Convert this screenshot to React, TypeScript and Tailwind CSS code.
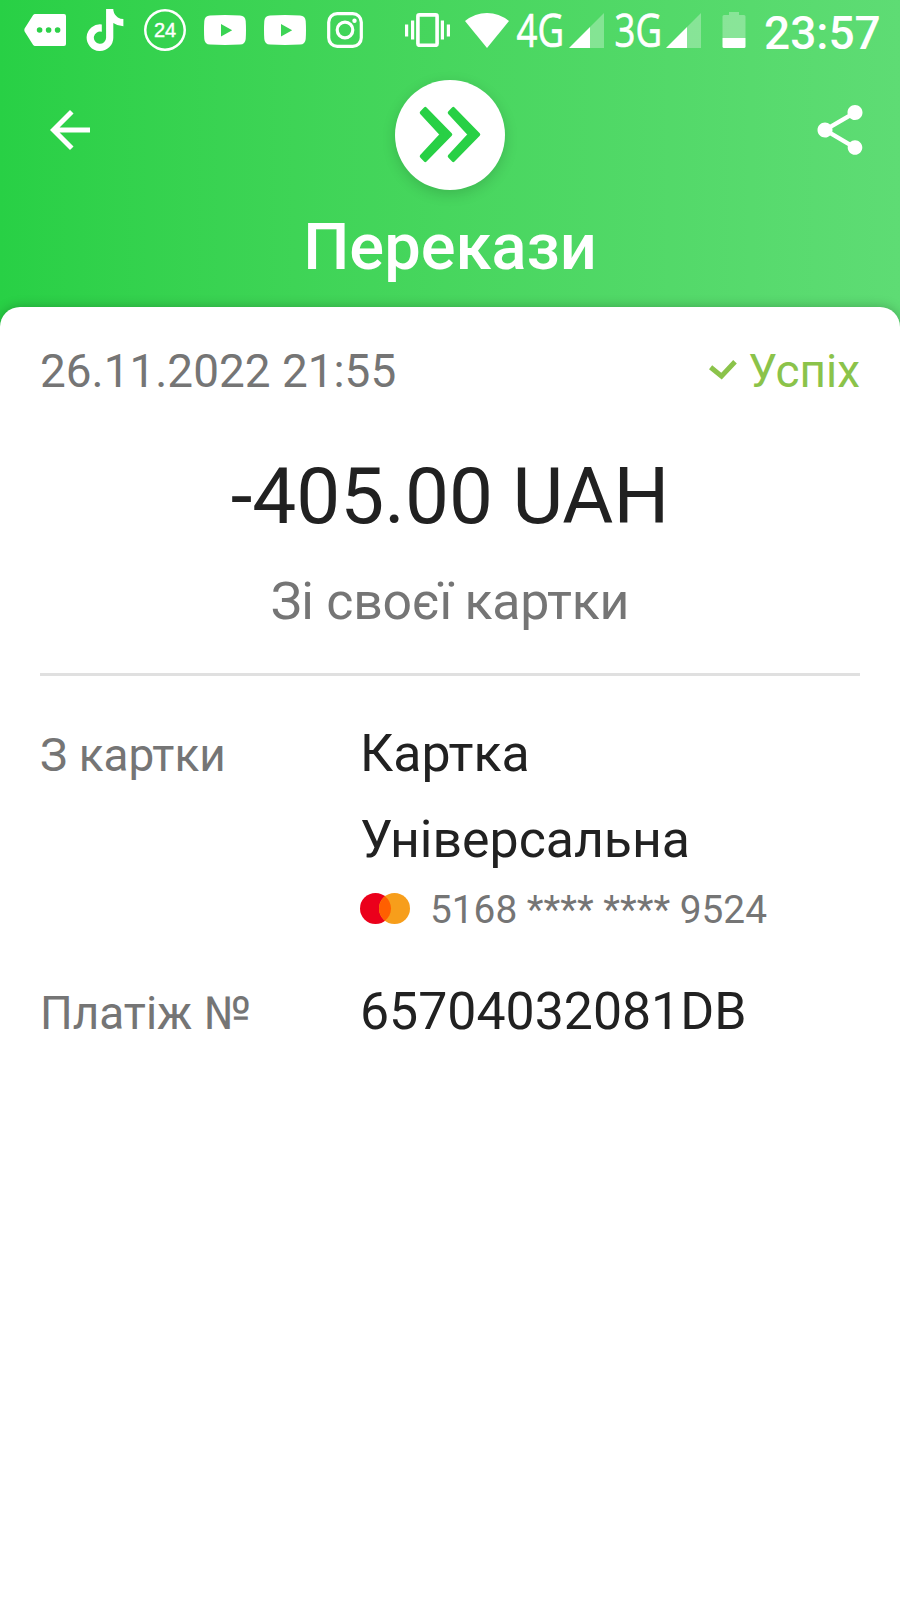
import { FaTiktok } from 'react-icons/fa6';
import { MdArrowBack, MdShare } from 'react-icons/md';

interface Detail {
  label: string;
  lines: string[];
  card?: string;
}

const details: Detail[] = [
  { label: 'З картки', lines: ['Картка', 'Універсальна'], card: '5168 **** **** 9524' },
  { label: 'Платіж №', lines: ['65704032081DB'] },
];

const YoutubeIcon = ({ className }: { className: string }) => (
  <svg className={className} width="42" height="30" viewBox="0 0 42 30" fill="#fff">
    <path
      fillRule="evenodd"
      d="M6 .4Q21-.4 36 .4Q41.3.7 41.7 6Q42.3 15 41.7 24Q41.3 29.3 36 29.6Q21 30.4 6 29.6Q.7 29.3.3 24Q-.3 15 .3 6Q.7.7 6 .4ZM17 9v12.4l11.2-6.2z"
    />
  </svg>
);

const SignalIcon = ({ className }: { className: string }) => (
  <svg className={className} width="35" height="35" viewBox="0 0 35 35" fill="#fff">
    <path d="M35 0V35H21V14z" opacity=".3" />
    <path d="M21 14V35H0z" />
  </svg>
);

const NetworkLabel = ({ text, className }: { text: string; className: string }) => (
  <svg className={className} width="48" height="66" viewBox="0 0 48 66">
    <text x="0.5" y="50" fill="#fff" stroke="#fff" strokeWidth="0.7" fontSize="45.5" fontFamily="'Open Sans', 'Noto Sans', sans-serif" textLength="47.5" lengthAdjust="spacingAndGlyphs">
      {text}
    </text>
  </svg>
);

const StatusBar = () => (
  <div className="flex h-[60px] items-center pl-6 [&>svg]:shrink-0">
    <svg width="42" height="32" viewBox="0 0 42 32" fill="#fff">
      <path fillRule="evenodd" d="M11 0H40Q42 0 42 2V30Q42 32 40 32H11Q10 32 9 30.800L.6 17.500Q0 16 .6 14.500L9 1.200Q10 0 11 0ZM12.800 16a2.800 2.800 0 1 0 5.600 0a2.800 2.800 0 1 0-5.600 0M21.800 16a2.800 2.800 0 1 0 5.600 0a2.800 2.800 0 1 0-5.600 0M30.800 16a2.800 2.800 0 1 0 5.600 0a2.800 2.800 0 1 0-5.600 0" />
    </svg>
    <FaTiktok className="ml-5 h-[42px] w-[38px] text-white" />
    <div className="ml-5 flex size-[42px] items-center justify-center rounded-full font-['Liberation_Sans',sans-serif] text-[20px] leading-none text-white shadow-[inset_0_0_0_2.5px_#fff] [-webkit-text-stroke:0.4px_white]">
      24
    </div>
    <YoutubeIcon className="ml-[18px]" />
    <YoutubeIcon className="ml-[18px]" />
    <svg className="ml-[21px]" width="36" height="36" viewBox="0 0 36 36" fill="none" stroke="#fff" strokeWidth="3.200">
      <rect x="1.700" y="1.700" width="32.600" height="32.600" rx="8.500" />
      <circle cx="18" cy="18" r="7.800" />
      <circle cx="27.500" cy="8.700" r="2.200" fill="#fff" stroke="none" />
    </svg>
    <svg className="ml-[42px]" width="45" height="34" viewBox="0 0 45 34" fill="#fff">
      <path d="M0 11.500h3.200v12H0zM6 7.500h3.200v19H6zM35.800 7.500H39v19h-3.200zM41.800 11.500H45v12h-3.200z" />
      <rect x="12.900" y="1.900" width="19.200" height="30.400" rx="1.500" fill="none" stroke="#fff" strokeWidth="3.600" />
    </svg>
    <svg className="ml-[15px]" width="44" height="35" viewBox="0 0 44 35" fill="#fff">
      <path d="M0 8Q10 0 22 0T44 8L22 35z" />
    </svg>
    <NetworkLabel text="4G" className="ml-[7px]" />
    <SignalIcon className="ml-[5px]" />
    <NetworkLabel text="3G" className="ml-[10px]" />
    <SignalIcon className="ml-1" />
    <svg className="ml-[21px]" width="24" height="36" viewBox="0 0 24 36" fill="#fff">
      <path d="M7 0H17V3H22Q23.500 3 23.500 4.500V26H.5V4.500Q.5 3 2 3H7z" opacity=".3" />
      <path d="M.5 26H23.500V34.500Q23.500 36 22 36H2Q.5 36 .5 34.500z" />
    </svg>
    <span className="mt-[5px] ml-[18px] text-[46px] leading-[54px] font-medium whitespace-nowrap text-white">23:57</span>
  </div>
);

const Header = () => (
  <header className="h-[307px] text-white">
    <StatusBar />
    <div className="grid h-[149px] grid-cols-3 items-start">
      <MdArrowBack className="mt-10 ml-10 size-[60px]" />
      <div className="mt-5 size-[110px] justify-self-center rounded-full bg-white shadow-[0_4px_14px_rgba(0,0,0,0.15)]">
        <svg width="110" height="110" viewBox="0 0 110 110" fill="#28d045" stroke="#28d045" strokeWidth="3.500" strokeLinejoin="round">
          <path d="M26.500 32.800L46.600 54.500L26.500 76.300L30.300 80.300L55.500 54.500L30.300 28.700z" />
          <path d="M54.500 32.800L74.600 54.500L54.500 76.300L58.300 80.300L83.500 54.500L58.300 28.700z" />
        </svg>
      </div>
      <MdShare className="mt-10 mr-[30px] size-[60px] justify-self-end" />
    </div>
    <h1 className="text-center text-[65px] leading-[76px] font-medium">Перекази</h1>
  </header>
);

const CardNumber = ({ number }: { number: string }) => (
  <div className="mt-[2px] flex h-[50px] items-center">
    <svg className="-mt-1" width="50" height="31" viewBox="0 0 50 31">
      <circle cx="15.500" cy="15.500" r="15.500" fill="#eb001b" />
      <circle cx="34.500" cy="15.500" r="15.500" fill="#f79e1b" />
      <path d="M25 3.250A15.500 15.500 0 0 1 25 27.750A15.500 15.500 0 0 1 25 3.250z" fill="#ff5f00" />
    </svg>
    <span className="ml-5 text-[38.800px] leading-[50px] text-[#757575]">{number}</span>
  </div>
);

const DetailRow = ({ label, lines, card }: Detail) => (
  <div className="flex items-baseline">
    <span className="w-80 shrink-0 text-[45.900px] text-[#757575]">{label}</span>
    <div className="text-[51.800px] leading-[86px] text-[#212121]">
      {lines.map((line) => (
        <div key={line}>{line}</div>
      ))}
      {card && <CardNumber number={card} />}
    </div>
  </div>
);

const App = () => {
  return (
    <div className="h-[1600px] w-[900px] overflow-hidden bg-linear-to-r from-[#28d045] to-[#5edc74] font-[Roboto,sans-serif]">
      <Header />
      <main className="relative h-[1293px] rounded-t-[20px] bg-white px-10 pt-[34px] shadow-[0_0_12px_rgba(0,0,0,0.25)]">
        <div className="flex h-[60px] items-center justify-between text-[45.900px] leading-[60px]">
          <span className="text-[#757575]">26.11.2022 21:55</span>
          <span className="flex items-center text-[#8bc34a]">
            <svg className="-mt-[2px] mr-[11px]" width="28" height="20" viewBox="0 0 28 20" fill="none" stroke="currentColor" strokeWidth="5">
              <path d="M1.600 7.300L12.500 16.200L26 1.800" />
            </svg>
            Успіх
          </span>
        </div>
        <div className="mt-[50px] text-center text-[78.300px] leading-[90px] text-[#212121]">-405.00 UAH</div>
        <div className="mt-[31px] text-center text-[51.800px] leading-[60px] tracking-[-0.250px] text-[#757575]">Зі своєї картки</div>
        <div className="mt-[41px] h-[3px] bg-[#e0e0e0]" />
        <div className="mt-[35px] flex flex-col gap-[34px]">
          {details.map((detail) => (
            <DetailRow key={detail.label} {...detail} />
          ))}
        </div>
      </main>
    </div>
  );
};

export default App;
